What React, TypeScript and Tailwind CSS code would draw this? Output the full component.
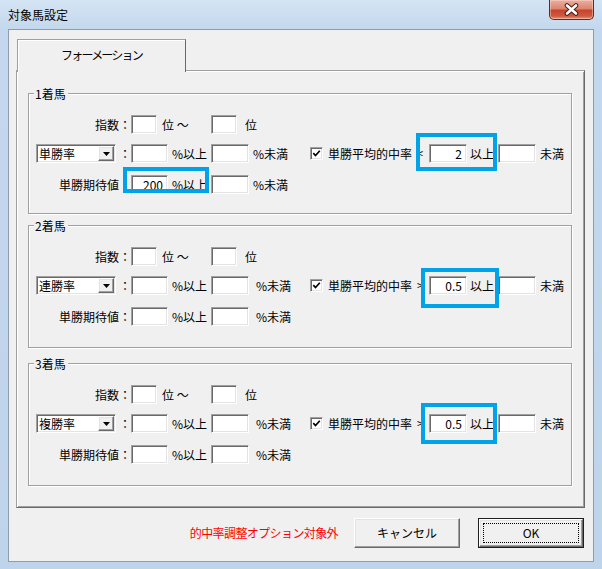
import React from "react";

const sunken =
  "bg-white border border-t-[#a0a0a0] border-l-[#a0a0a0] border-r-white border-b-white shadow-[inset_1px_1px_0_#696969,inset_-1px_-1px_0_#e3e3e3]";
const raised =
  "bg-[#f0f0f0] border border-t-white border-l-white border-r-[#696969] border-b-[#696969] shadow-[inset_-1px_-1px_0_#a0a0a0,inset_1px_1px_0_#e3e3e3]";

function Field({ className, value }: { className: string; value?: string }) {
  return (
    <div
      className={`${sunken} ${className} h-[19px] shrink-0 flex items-center justify-end pr-[4px] text-[12px] leading-none`}
    >
      {value}
    </div>
  );
}

function Combo({ text }: { text: string }) {
  return (
    <div className={`${sunken} w-[80px] h-[19px] shrink-0 flex items-center pl-[2px] pr-[1px]`}>
      <span className="flex-1 text-[12px] leading-none whitespace-nowrap">{text}</span>
      <div className={`${raised} w-[16px] h-[15px] flex items-center justify-center`}>
        <svg width="7" height="4" viewBox="0 0 7 4">
          <path d="M0 0H7L3.5 4Z" fill="#000" />
        </svg>
      </div>
    </div>
  );
}

function Check() {
  return (
    <div className={`${sunken} w-[13px] h-[13px] shrink-0 flex items-center justify-center`}>
      <svg width="9" height="9" viewBox="0 0 9 9">
        <path d="M1.3 4.2L3.5 6.5L7.8 1.8" stroke="#000" strokeWidth="1.7" fill="none" />
      </svg>
    </div>
  );
}

type G = {
  title: string;
  sel: string;
  label3: string;
  v3?: string;
  op: string;
  vr: string;
  mikan: string;
  h: string;
  mt: string;
  boxes: string[];
};

const groups: G[] = [
  {
    title: "1着馬",
    sel: "単勝率",
    label3: "単勝期待値",
    v3: "200",
    op: "<",
    vr: "2",
    mikan: "w-[61px] pl-[4px]",
    h: "h-[121px]",
    mt: "mt-0",
    boxes: [
      "left-[94px] top-[73px] w-[86px] h-[26px]",
      "left-[387px] top-[39px] w-[81px] h-[38px]",
    ],
  },
  {
    title: "2着馬",
    sel: "連勝率",
    label3: "単勝期待値：",
    op: ">",
    vr: "0.5",
    mikan: "w-[61px] pl-[7px]",
    h: "h-[123px]",
    mt: "mt-[11px]",
    boxes: ["left-[392px] top-[42px] w-[78px] h-[40px]"],
  },
  {
    title: "3着馬",
    sel: "複勝率",
    label3: "単勝期待値：",
    op: ">",
    vr: "0.5",
    mikan: "w-[61px] pl-[7px]",
    h: "h-[123px]",
    mt: "mt-[15px]",
    boxes: ["left-[392px] top-[39px] w-[76px] h-[41px]"],
  },
];

function Group({ g }: { g: G }) {
  return (
    <div
      className={`relative ${g.h} ${g.mt} w-[544px] shrink-0 border border-[#a0a0a0] shadow-[inset_1px_1px_0_#fff,1px_1px_0_#fff] pt-[21px] pl-[7px] flex flex-col text-[12px] leading-none`}
    >
      <span className="absolute left-[5px] top-[-7px] bg-[#f0f0f0] pl-[1px] pr-[2px] text-[12px] leading-[13px]">
        {g.title}
      </span>

      {/* row 1 */}
      <div className="flex h-[19px] items-center whitespace-nowrap">
        <div className="w-[95px] text-right">指数：</div>
        <Field className="w-[26px]" />
        <div className="w-[54px] pl-[5px]">位 〜</div>
        <Field className="w-[26px]" />
        <div className="pl-[8px]">位</div>
      </div>

      {/* row 2 */}
      <div className="flex h-[19px] items-center mt-[10px] whitespace-nowrap">
        <Combo text={g.sel} />
        <div className="w-[15px] pl-[3px]">：</div>
        <Field className="w-[37px]" />
        <div className="w-[43px] pl-[4px]">%以上</div>
        <Field className="w-[38px]" />
        <div className={g.mikan}>%未満</div>
        <Check />
        <div className="w-[94px] pl-[5px]">単勝平均的中率</div>
        <div className="w-[12px] text-[11px] text-black">{g.op}</div>
        <Field className="w-[38px]" value={g.vr} />
        <div className="w-[31px] pl-[3px]">以上</div>
        <Field className="w-[38px]" />
        <div className="pl-[4px]">未満</div>
      </div>

      {/* row 3 */}
      <div className="flex h-[19px] items-center mt-[12px] whitespace-nowrap">
        <div className={g.v3 ? "w-[95px] text-right pr-[12px]" : "w-[95px] text-right"}>{g.label3}</div>
        <Field className="w-[37px]" value={g.v3} />
        <div className="w-[43px] pl-[4px]">%以上</div>
        <Field className="w-[38px]" />
        <div className={g.mikan}>%未満</div>
      </div>

      {g.boxes.map((b, i) => (
        <div key={i} className={`absolute ${b} border-[4px] border-[#00a2e8] pointer-events-none`} />
      ))}
    </div>
  );
}

export default function App() {
  return (
    <div className="w-[602px] h-[569px] overflow-hidden flex flex-col px-[8px] pb-[8px] bg-[linear-gradient(180deg,#d4e4f4_0px,#c4d8ed_29px,#bed4ea_100%)] font-['Noto_Sans_CJK_JP',sans-serif] text-black">
      {/* title bar */}
      <div className="h-[29px] shrink-0 flex justify-between">
        <div className="self-center text-[12px] leading-none pt-[1px]">対象馬設定</div>
        <div className="self-start w-[45px] h-[20px] rounded-b-[5px] border border-t-0 border-[#6e2418] bg-[linear-gradient(180deg,#eab1a3_0%,#dc8470_45%,#c6442c_55%,#cf5a40_85%,#e49a7f_100%)] shadow-[inset_0_0_0_1px_rgba(255,220,210,0.45)] flex items-center justify-center">
          <svg width="15" height="13" viewBox="0 0 15 13">
            <path d="M3 2.5L12 10.5M12 2.5L3 10.5" stroke="#4a1c14" strokeWidth="4.6" strokeLinecap="round" />
            <path d="M3 2.5L12 10.5M12 2.5L3 10.5" stroke="#ffffff" strokeWidth="2.6" strokeLinecap="round" />
          </svg>
        </div>
      </div>

      {/* client */}
      <div className="h-[533px] shrink-0 border border-[#8d9cae] bg-[#f0f0f0] flex flex-col">
        {/* tab header */}
        <div className="relative z-10 ml-[8px] mt-[9px] -mb-[2px] w-[169px] h-[33px] shrink-0 bg-[#f0f0f0] border border-b-0 border-t-[#a0a0a0] border-l-[#a0a0a0] border-r-[#696969] shadow-[inset_1px_1px_0_#fff] flex items-start justify-center pt-[9px] text-[12px] leading-none tracking-[-1.8px]">
          フォーメーション
        </div>

        {/* tab panel */}
        <div className="ml-[7px] w-[569px] h-[438px] shrink-0 border border-t-[#a0a0a0] border-l-[#a0a0a0] border-r-[#696969] border-b-[#696969] shadow-[inset_1px_1px_0_#fff,inset_-1px_-1px_0_#a0a0a0] pt-[22px] pl-[11px] flex flex-col">
          {groups.map((g) => (
            <Group key={g.title} g={g} />
          ))}
        </div>

        {/* bottom row */}
        <div className="mt-[10px] mr-[9px] h-[30px] shrink-0 flex items-center justify-end">
          <div className="mr-[16px] text-[12px] leading-none text-[#ff0000] tracking-[-0.6px] whitespace-nowrap">
            的中率調整オプション対象外
          </div>
          <div className={`${raised} w-[106px] h-[30px] flex items-center justify-center text-[12px] leading-none`}>
            キャンセル
          </div>
          <div className="ml-[18px] w-[106px] h-[30px] border border-[#1e1e1e] flex">
            <div className={`${raised} flex-1 flex items-center justify-center p-[3px]`}>
              <div className="w-full h-full border border-dotted border-[#000] flex items-center justify-center text-[12px] leading-none">
                OK
              </div>
            </div>
          </div>
        </div>
      </div>
    </div>
  );
}
